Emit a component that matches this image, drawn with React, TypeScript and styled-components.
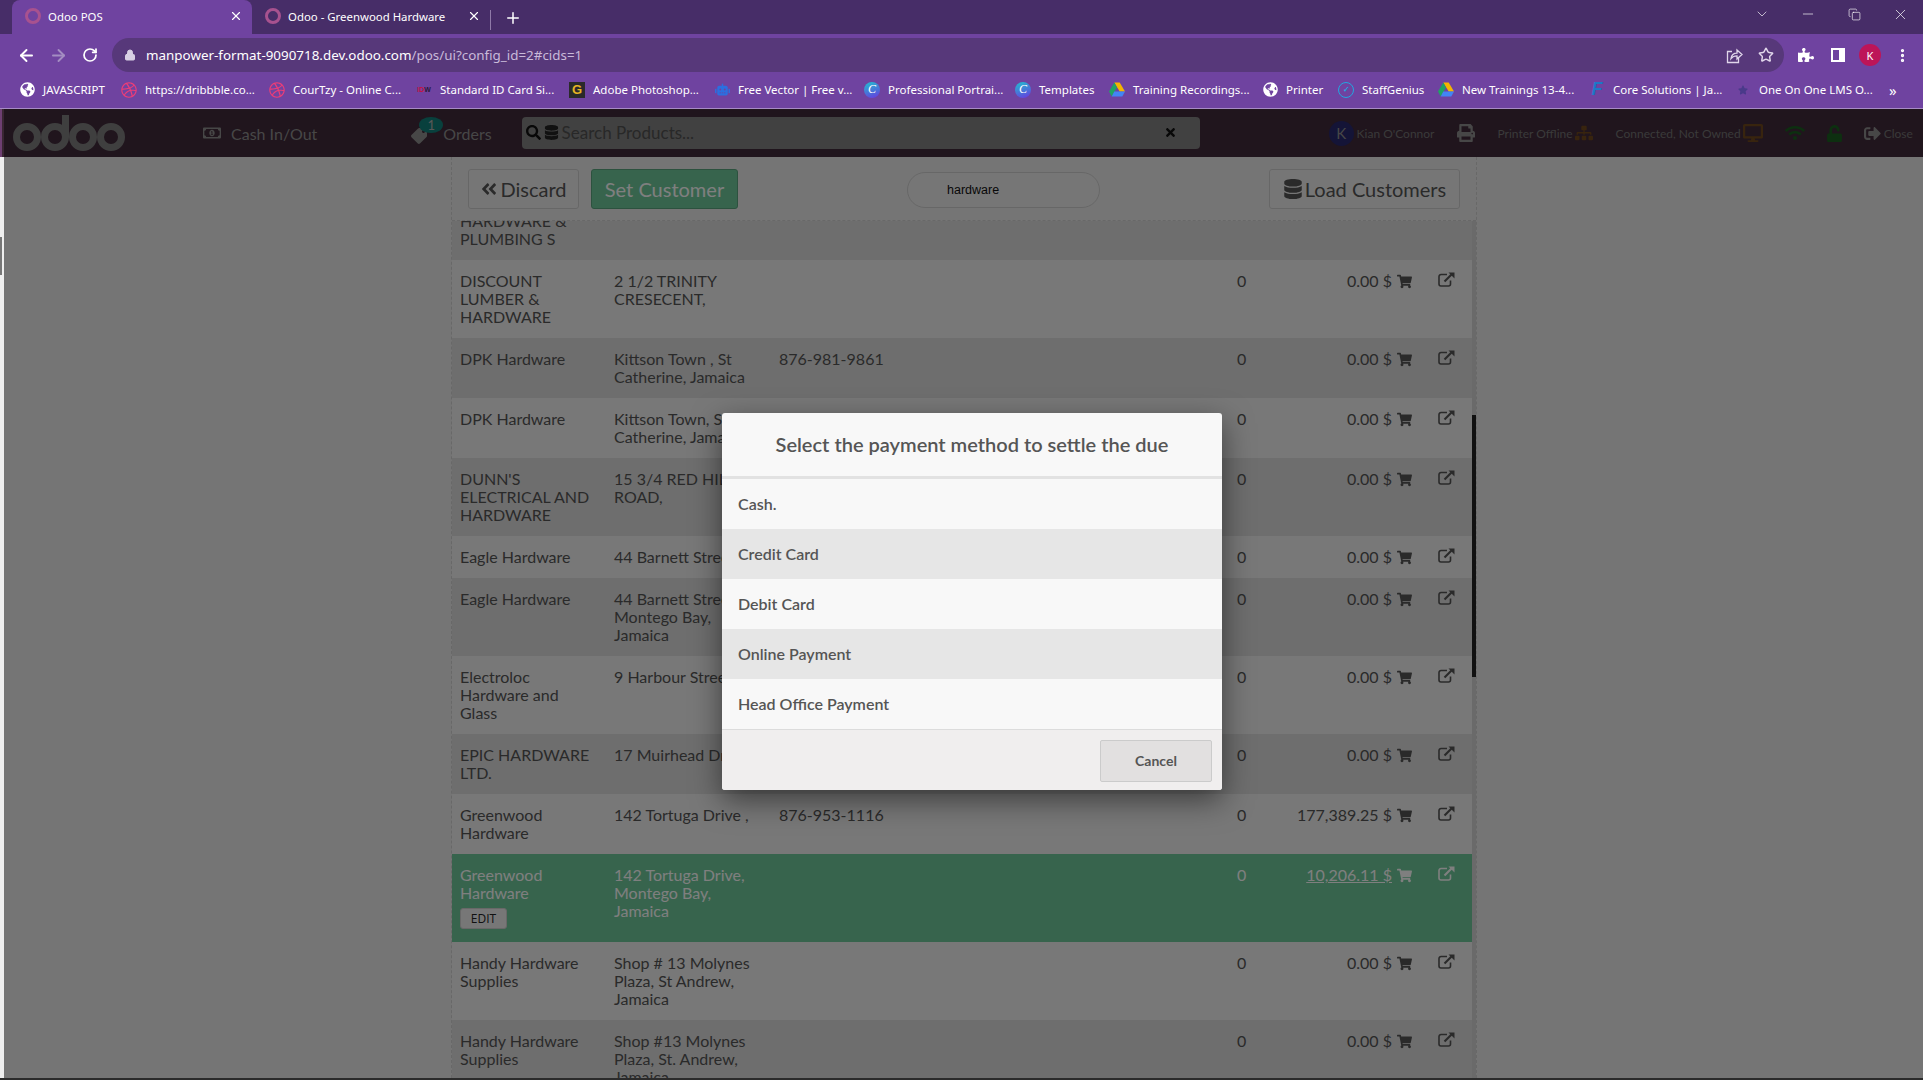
import React from "react";
import styled, { createGlobalStyle } from "styled-components";
import {
  FaShoppingCart,
  FaDatabase,
  FaSearch,
  FaTimes,
  FaPrint,
  FaSitemap,
  FaDesktop,
  FaWifi,
  FaUnlock,
  FaSignOutAlt,
  FaRegMoneyBillAlt,
  FaTag,
  FaDribbble,
  FaRobot,
  FaGlobeAmericas,
  FaStar,
  FaPuzzlePiece,
  FaAngleDoubleLeft,
} from "react-icons/fa";
import { ArrowLeft, ArrowRight, RotateCw, Lock, Star, ChevronDown, Minus, Copy, X, Plus, MoreVertical } from "lucide-react";

const GlobalStyle = createGlobalStyle`
  html, body { margin: 0; padding: 0; background: #efefef; }
  #root { width: 1923px; height: 1080px; overflow: hidden; }
  * { box-sizing: border-box; }
`;

const Root = styled.div`
  width: 1923px;
  height: 1080px;
  display: flex;
  flex-direction: column;
  overflow: hidden;
  font-family: "Lato", sans-serif;
`;

/* chrome browser */
const TabStrip = styled.div`
  height: 34px;
  background: #472d68;
  display: flex;
  align-items: flex-end;
  padding-left: 12px;
  color: #fff;
  font: 11.4px "Noto Sans", sans-serif;
`;

const Tab = styled.div<{ $active?: boolean }>`
  width: ${(p) => (p.$active ? 240 : 238)}px;
  height: 34px;
  display: flex;
  align-items: center;
  padding: 0 9px 2px 12px;
  background: ${(p) => (p.$active ? "#6f43a0" : "transparent")};
  border-radius: 8px 8px 0 0;
`;

const TabIcon = styled.span`
  width: 16px;
  height: 16px;
  border: 3px solid #a8528f;
  border-radius: 50%;
  margin: 0 7px 0 1px;
  flex: none;
`;

const TabTitle = styled.span`
  flex: 1;
  white-space: nowrap;
`;

const Divider = styled.span`
  width: 1px;
  height: 20px;
  background: #8f7aa8;
  margin: 0 0 4px 0;
`;

const NewTab = styled.span`
  display: flex;
  margin: 0 0 7px 13px;
`;

const WindowControls = styled.div`
  margin-left: auto;
  display: flex;
  align-items: center;
  height: 28px;
  margin-bottom: 6px;
`;

const WinBtn = styled.span<{ $w: number }>`
  width: ${(p) => p.$w}px;
  display: flex;
  justify-content: center;
`;

const Toolbar = styled.div`
  height: 38px;
  background: #6f43a0;
  display: flex;
  align-items: flex-end;
  padding-left: 5px;
  color: #fff;
`;

const NavBtn = styled.span<{ $w: number; $dim?: boolean }>`
  width: ${(p) => p.$w}px;
  height: 34px;
  flex: none;
  display: flex;
  align-items: center;
  justify-content: center;
  color: ${(p) => (p.$dim ? "#a48dc2" : "#fff")};
`;

const Omnibox = styled.div`
  width: 1672px;
  height: 34px;
  margin-left: 1px;
  background: #57387a;
  border-radius: 17px;
  display: flex;
  align-items: center;
  padding-left: 12px;
  font: 13.4px "Noto Sans", sans-serif;
  color: #fff;
  flex: none;
`;

const UrlText = styled.span`
  margin-left: 10px;
  flex: 1;
  white-space: nowrap;
`;

const UrlDim = styled.span`
  color: #c9bad9;
`;

const OmniIcon = styled.span<{ $w: number }>`
  width: ${(p) => p.$w}px;
  display: flex;
  justify-content: center;
  color: #e0d6ea;
`;

const Avatar = styled.span`
  width: 22px;
  height: 22px;
  border-radius: 50%;
  background: #bd1558;
  color: #fff;
  font: 11px "Noto Sans", sans-serif;
  display: flex;
  align-items: center;
  justify-content: center;
`;

const SideIcon = styled.span`
  width: 14px;
  height: 14px;
  border: 2px solid #fff;
  border-right-width: 6px;
  display: block;
`;

const BookmarkBar = styled.div`
  height: 37px;
  background: #6f43a0;
  border-bottom: 1px solid #a78bc5;
  display: flex;
  align-items: center;
  padding: 0 0 1px 19px;
  color: #fff;
  font: 11.5px "Noto Sans", sans-serif;
`;

const Bookmark = styled.div<{ $w: number }>`
  width: ${(p) => p.$w}px;
  display: flex;
  align-items: center;
  flex: none;
  white-space: nowrap;
`;

const BookmarkIcon = styled.span`
  width: 16px;
  height: 16px;
  margin-right: 8px;
  flex: none;
  display: flex;
  align-items: center;
  justify-content: center;
`;

const CanvaDot = styled.span`
  width: 16px;
  height: 16px;
  border-radius: 50%;
  background: linear-gradient(160deg, #1fc3d0, #6a35e0);
  font: italic 12px "Liberation Serif", serif;
  color: #fff;
  display: flex;
  align-items: center;
  justify-content: center;
`;

const GoogleG = styled.span`
  width: 16px;
  height: 16px;
  background: #2a2a2a;
  color: #e6b323;
  font: bold 13px "Liberation Sans", sans-serif;
  display: flex;
  align-items: center;
  justify-content: center;
`;

const IdwMark = styled.span`
  font: bold 7px "Liberation Sans", sans-serif;
  color: #2a1a3a;
`;

const IdwRed = styled.span`
  color: #c3123f;
`;

const FMark = styled.span`
  font: italic bold 18px "Liberation Sans", sans-serif;
  color: #1c78c8;
`;

const StaffRing = styled.span`
  width: 16px;
  height: 16px;
  border: 1.5px solid #22a7e0;
  border-radius: 50%;
  color: #22a7e0;
  font: bold 8px "Liberation Sans", sans-serif;
  display: flex;
  align-items: center;
  justify-content: center;
`;

const More = styled.span`
  margin-left: 10px;
  font-size: 15px;
`;

/* pos page */
const Page = styled.div`
  flex: 1;
  min-height: 0;
  display: flex;
  position: relative;
`;

const LeftEdge = styled.div`
  width: 4px;
  flex: none;
  background: #efefef;
  display: flex;
  flex-direction: column;
`;

const EdgeHead = styled.div`
  height: 48px;
  background: linear-gradient(90deg, #6e3f72 50%, #3a2733 50%);
`;

const EdgeThumb = styled.div`
  width: 2px;
  height: 38px;
  margin-top: 80px;
  background: #777;
`;

const Screen = styled.div`
  flex: 1;
  min-width: 0;
  position: relative;
  display: flex;
  flex-direction: column;
  background: #ebebeb;
`;

const PosHeader = styled.div`
  height: 48px;
  flex: none;
  background: #402a3a;
  display: flex;
  align-items: center;
  color: #8e8e8e;
  font-size: 16px;
`;

const Logo = styled.svg`
  width: 112px;
  height: 36px;
  margin-left: 9px;
  flex: none;
`;

const HeaderItem = styled.div<{ $ml: number }>`
  margin-left: ${(p) => p.$ml}px;
  display: flex;
  align-items: center;
  position: relative;
  flex: none;
  white-space: nowrap;
`;

const HeaderLabel = styled.span<{ $ml: number }>`
  margin-left: ${(p) => p.$ml}px;
`;

const OrderTag = styled(FaTag)`
  transform: scaleX(-1);
  margin-top: 6px;
`;

const OrderBadge = styled.span`
  position: absolute;
  left: 8px;
  top: -5px;
  width: 24px;
  height: 16px;
  border-radius: 50%;
  background: #11807a;
  color: #b0b0b0;
  font-size: 13px;
  line-height: 16px;
  display: flex;
  align-items: center;
  justify-content: center;
`;

const SearchBox = styled.div`
  width: 678px;
  height: 32px;
  margin-left: 30px;
  flex: none;
  background: #828282;
  border-radius: 4px;
  display: flex;
  align-items: center;
  padding: 0 23px 2px 4px;
  color: #111;
  font-size: 17px;
`;

const DbIcon = styled(FaDatabase)`
  margin-left: 3px;
  color: #222;
`;

const SearchText = styled.span`
  flex: 1;
  color: #505050;
  margin-left: 3px;
`;

const StatusText = styled.span<{ $ml?: number; $size?: number }>`
  margin-left: ${(p) => p.$ml ?? 0}px;
  font-size: ${(p) => p.$size ?? 12}px;
  color: #747474;
  white-space: nowrap;
`;

const StatusIcon = styled.span<{ $ml?: number; $color?: string }>`
  margin-left: ${(p) => p.$ml ?? 0}px;
  color: ${(p) => p.$color ?? "inherit"};
  display: flex;
`;

const UserDot = styled.span`
  width: 25px;
  height: 25px;
  border-radius: 50%;
  background: #28286e;
  color: #8e8e8e;
  font-size: 15px;
  display: flex;
  align-items: center;
  justify-content: center;
  margin-right: 3px;
`;

const Window = styled.div`
  width: 1026px;
  margin-left: 447px;
  flex: 1;
  min-height: 0;
  display: flex;
  flex-direction: column;
  border: 1px dashed #d0d0d0;
  border-width: 0 1px;
`;

const WindowBar = styled.div`
  height: 64px;
  flex: none;
  display: flex;
  align-items: flex-start;
  padding: 12px 16px 0 16px;
  border-bottom: 1px dashed #d0d0d0;
`;

const BarButton = styled.div<{ $w: number; $primary?: boolean }>`
  width: ${(p) => p.$w}px;
  height: 40px;
  flex: none;
  border-radius: 3px;
  border: 1px solid ${(p) => (p.$primary ? "#5ba57f" : "#cfcfcf")};
  background: ${(p) => (p.$primary ? "#6ec89b" : "#ededed")};
  color: ${(p) => (p.$primary ? "#fff" : "#555")};
  font-size: 20px;
  display: flex;
  align-items: center;
  justify-content: center;
  gap: 2px;
  margin-right: 12px;
  padding-bottom: 1px;
  white-space: nowrap;
`;

const SearchPill = styled.div`
  width: 193px;
  height: 36px;
  margin: 3px 0 0 157px;
  flex: none;
  border: 1px solid #cfcfcf;
  border-radius: 18px;
  background: #ededed;
  display: flex;
  align-items: center;
  padding-left: 39px;
  font: 12.5px "Liberation Sans", sans-serif;
  color: #111;
`;

const LoadButton = styled(BarButton)`
  margin: 0 0 0 auto;
`;

const ListArea = styled.div`
  flex: 1;
  min-height: 0;
  display: flex;
  overflow: hidden;
`;

const List = styled.div`
  flex: 1;
  margin-top: -39px;
`;

const Scrollbar = styled.div`
  width: 4px;
  flex: none;
  background: #d4d4d4;
  padding-top: 194px;
`;

const ScrollThumb = styled.div`
  height: 262px;
  background: #222;
`;

const Row = styled.div<{ $alt?: boolean; $sel?: boolean }>`
  display: grid;
  grid-template-columns: 154px 165px 458px 40px 115px 46px 1fr;
  padding: 12px 0 12px 8px;
  font-size: 16px;
  line-height: 18px;
  background: ${(p) => (p.$sel ? "#6ec89b" : p.$alt ? "#dcdcdc" : "#f0f0f0")};
  color: ${(p) => (p.$sel ? "#fff" : "#555")};
`;

const Name = styled.div`
  max-width: 138px;
`;

const Address = styled.div`
  max-width: 142px;
`;

const Amount = styled.div<{ $sel?: boolean }>`
  text-align: right;
  text-decoration: ${(p) => (p.$sel ? "underline" : "none")};
`;

const Cart = styled.div`
  padding-left: 5px;
  display: flex;
  align-items: flex-start;
  padding-top: 2px;
`;

const LinkCell = styled.div`
  display: flex;
  align-items: flex-start;
`;

const EditBtn = styled.div`
  width: 47px;
  height: 21px;
  margin: 6px 0 1px 0;
  background: #eee;
  border-radius: 3px;
  border: 1px solid #d0d0d0;
  color: #222;
  font: 12px "Open Sans", sans-serif;
  display: flex;
  align-items: center;
  justify-content: center;
`;

const BottomStrip = styled.div`
  height: 2px;
  flex: none;
  background: #2b2b2b;
`;

/* dim layer and popup */
const Dim = styled.div`
  position: absolute;
  inset: 0;
  background: rgba(0, 0, 0, 0.5);
`;

const Modal = styled.div`
  position: absolute;
  left: 718px;
  top: 304px;
  width: 500px;
  height: 377px;
  border-radius: 3px;
  background: #f8f8f8;
  box-shadow: 0 10px 30px rgba(0, 0, 0, 0.5);
  overflow: hidden;
  color: #555;
  display: flex;
  flex-direction: column;
`;

const ModalTitle = styled.div`
  height: 66px;
  flex: none;
  border-bottom: 3px solid #e2e2e2;
  padding-bottom: 2px;
  font-size: 20px;
  font-weight: 600;
  display: flex;
  align-items: center;
  justify-content: center;
`;

const Method = styled.div<{ $alt?: boolean }>`
  height: 50px;
  flex: none;
  padding: 0 0 2px 16px;
  display: flex;
  align-items: center;
  font-size: 16px;
  font-weight: 600;
  background: ${(p) => (p.$alt ? "#e6e6e6" : "#f8f8f8")};
`;

const ModalFooter = styled.div`
  flex: 1;
  background: #f0eeee;
  border-top: 1px solid #dcdcdc;
  display: flex;
  justify-content: flex-end;
  padding: 10px 10px 0 0;
`;

const CancelBtn = styled.div`
  width: 112px;
  height: 42px;
  background: #e2e0e0;
  border: 1px solid #cbcbcb;
  border-radius: 2px;
  padding-bottom: 2px;
  font-size: 14px;
  font-weight: 700;
  display: flex;
  align-items: center;
  justify-content: center;
`;

const DriveIcon = () => (
  <svg width="16" height="15" viewBox="0 0 16 14">
    <polygon points="5.3,0 10.7,0 16,9 10.7,9" fill="#f5b400" />
    <polygon points="5.3,0 0,9 2.7,14 8,5" fill="#1fa463" />
    <polygon points="2.7,14 13.3,14 16,9 5.3,9" fill="#4285f4" />
  </svg>
);

const LinkIcon = () => (
  <svg width="17" height="15" viewBox="0 0 17 15" fill="none" stroke="currentColor">
    <path d="M9 2.5H3a2 2 0 0 0-2 2V12a2 2 0 0 0 2 2h7.5a2 2 0 0 0 2-2V8.5" strokeWidth="1.6" />
    <path d="M6.5 9.5 14 2" strokeWidth="2.2" />
    <path d="M10.5 0.5H16.5V6.5Z" fill="currentColor" stroke="none" />
  </svg>
);

// chrome's "share this page" icon: open box with a curved arrow
const ShareIcon = () => (
  <svg width="17" height="17" viewBox="0 0 17 17" fill="none" stroke="currentColor" strokeWidth="1.3">
    <path d="M6 4.5H1.5V15.5H12.5V11" />
    <path d="M5 11.5C5.5 8 8 6.2 11 6.2V3L16 7.5 11 12V8.8C8.5 8.8 6.5 9.6 5 11.5Z" />
  </svg>
);

const OdooLogo = () => (
  <Logo viewBox="0 0 112 36" fill="none" stroke="#7e7e7e" strokeWidth="7">
    <circle cx="14" cy="22" r="10.5" />
    <circle cx="42" cy="22" r="10.5" />
    <path d="M52.5 22V0" />
    <circle cx="70" cy="22" r="10.5" />
    <circle cx="98" cy="22" r="10.5" />
  </Logo>
);

const bookmarks = [
  { w: 102, text: "JAVASCRIPT", icon: <FaGlobeAmericas size={15} /> },
  { w: 148, text: "https://dribbble.co...", icon: <FaDribbble size={16} color="#ee3d77" /> },
  { w: 147, text: "CourTzy - Online C...", icon: <FaDribbble size={16} color="#ee3d77" /> },
  { w: 153, text: "Standard ID Card Si...", icon: <IdwMark><IdwRed>ID</IdwRed>W</IdwMark> },
  { w: 145, text: "Adobe Photoshop...", icon: <GoogleG>G</GoogleG> },
  { w: 150, text: "Free Vector | Free v...", icon: <FaRobot size={15} color="#2b6fe0" /> },
  { w: 151, text: "Professional Portrai...", icon: <CanvaDot>C</CanvaDot> },
  { w: 94, text: "Templates", icon: <CanvaDot>C</CanvaDot> },
  { w: 153, text: "Training Recordings...", icon: <DriveIcon /> },
  { w: 76, text: "Printer", icon: <FaGlobeAmericas size={15} /> },
  { w: 100, text: "StaffGenius", icon: <StaffRing>✓</StaffRing> },
  { w: 151, text: "New Trainings 13-4...", icon: <DriveIcon /> },
  { w: 146, text: "Core Solutions | Ja...", icon: <FMark>F</FMark> },
  { w: 144, text: "One On One LMS O...", icon: <FaStar size={10} color="#4a3a8a" /> },
];

type Customer = {
  name: string;
  address: string;
  phone?: string;
  amount: string;
  sel?: boolean;
};

const customers: Customer[] = [
  { name: "ELECTRICAL HARDWARE & PLUMBING S", address: "", amount: "" },
  { name: "DISCOUNT LUMBER & HARDWARE", address: "2 1/2 TRINITY CRESECENT,", amount: "0.00 $" },
  { name: "DPK Hardware", address: "Kittson Town , St Catherine, Jamaica", phone: "876-981-9861", amount: "0.00 $" },
  { name: "DPK Hardware", address: "Kittson Town, St Catherine, Jamaica", amount: "0.00 $" },
  { name: "DUNN'S ELECTRICAL AND HARDWARE", address: "15 3/4 RED HILLS ROAD,", amount: "0.00 $" },
  { name: "Eagle Hardware", address: "44 Barnett Street", amount: "0.00 $" },
  { name: "Eagle Hardware", address: "44 Barnett Street, Montego Bay, Jamaica", amount: "0.00 $" },
  { name: "Electroloc Hardware and Glass", address: "9 Harbour Street", amount: "0.00 $" },
  { name: "EPIC HARDWARE LTD.", address: "17 Muirhead Dr", amount: "0.00 $" },
  { name: "Greenwood Hardware", address: "142 Tortuga Drive ,", phone: "876-953-1116", amount: "177,389.25 $" },
  { name: "Greenwood Hardware", address: "142 Tortuga Drive, Montego Bay, Jamaica", amount: "10,206.11 $", sel: true },
  { name: "Handy Hardware Supplies", address: "Shop # 13 Molynes Plaza, St Andrew, Jamaica", amount: "0.00 $" },
  { name: "Handy Hardware Supplies", address: "Shop #13 Molynes Plaza, St. Andrew, Jamaica", amount: "0.00 $" },
];

const methods = ["Cash.", "Credit Card", "Debit Card", "Online Payment", "Head Office Payment"];

export default function App() {
  return (
    <Root>
      <GlobalStyle />
      <TabStrip>
        <Tab $active>
          <TabIcon />
          <TabTitle>Odoo POS</TabTitle>
          <X size={14} />
        </Tab>
        <Tab>
          <TabIcon />
          <TabTitle>Odoo - Greenwood Hardware</TabTitle>
          <X size={14} />
        </Tab>
        <Divider />
        <NewTab>
          <Plus size={18} />
        </NewTab>
        <WindowControls>
          <WinBtn $w={46}><ChevronDown size={16} strokeWidth={1} /></WinBtn>
          <WinBtn $w={46}><Minus size={16} strokeWidth={1} /></WinBtn>
          <WinBtn $w={46}><Copy size={13} strokeWidth={1.2} /></WinBtn>
          <WinBtn $w={46}><X size={17} strokeWidth={1} /></WinBtn>
        </WindowControls>
      </TabStrip>
      <Toolbar>
        <NavBtn $w={42}><ArrowLeft size={19} strokeWidth={2.4} /></NavBtn>
        <NavBtn $w={22} $dim><ArrowRight size={19} strokeWidth={2.4} /></NavBtn>
        <NavBtn $w={42}><RotateCw size={16} strokeWidth={2.6} /></NavBtn>
        <Omnibox>
          <Lock size={12} fill="#d8cfe3" color="#d8cfe3" />
          <UrlText>
            manpower-format-9090718.dev.odoo.com<UrlDim>/pos/ui?config_id=2#cids=1</UrlDim>
          </UrlText>
          <OmniIcon $w={32}><ShareIcon /></OmniIcon>
          <OmniIcon $w={32}><Star size={16} strokeWidth={2.2} /></OmniIcon>
          <OmniIcon $w={2} />
        </Omnibox>
        <NavBtn $w={44}><FaPuzzlePiece size={16} /></NavBtn>
        <NavBtn $w={20}><SideIcon /></NavBtn>
        <NavBtn $w={44}><Avatar>K</Avatar></NavBtn>
        <NavBtn $w={20}><MoreVertical size={17} strokeWidth={2.6} /></NavBtn>
      </Toolbar>
      <BookmarkBar>
        {bookmarks.map((b, i) => (
          <Bookmark key={i} $w={b.w}>
            <BookmarkIcon>{b.icon}</BookmarkIcon>
            {b.text}
          </Bookmark>
        ))}
        <More>»</More>
      </BookmarkBar>

      <Page>
        <LeftEdge>
          <EdgeHead />
          <EdgeThumb />
        </LeftEdge>
        <Screen>
          <PosHeader>
            <OdooLogo />
            <HeaderItem $ml={78}>
              <FaRegMoneyBillAlt size={18} />
              <HeaderLabel $ml={10}>Cash In/Out</HeaderLabel>
            </HeaderItem>
            <HeaderItem $ml={94}>
              <OrderTag size={16} />
              <OrderBadge>1</OrderBadge>
              <HeaderLabel $ml={16}>Orders</HeaderLabel>
            </HeaderItem>
            <SearchBox>
              <FaSearch size={15} />
              <DbIcon size={15} />
              <SearchText>Search Products...</SearchText>
              <FaTimes size={13} />
            </SearchBox>
            <HeaderItem $ml={129}>
              <UserDot>K</UserDot>
              <StatusText>Kian O'Connor</StatusText>
            </HeaderItem>
            <HeaderItem $ml={23}><FaPrint size={18} /></HeaderItem>
            <HeaderItem $ml={22}>
              <StatusText>Printer Offline</StatusText>
              <StatusIcon $ml={2} $color="#70481c"><FaSitemap size={18} /></StatusIcon>
            </HeaderItem>
            <HeaderItem $ml={23}>
              <StatusText>Connected, Not Owned</StatusText>
              <StatusIcon $ml={2} $color="#70481c"><FaDesktop size={20} /></StatusIcon>
            </HeaderItem>
            <HeaderItem $ml={22}><StatusIcon $color="#1a5e20"><FaWifi size={20} /></StatusIcon></HeaderItem>
            <HeaderItem $ml={21}><StatusIcon $color="#1a5e20"><FaUnlock size={17} /></StatusIcon></HeaderItem>
            <HeaderItem $ml={21}>
              <FaSignOutAlt size={17} />
              <StatusText $ml={3}>Close</StatusText>
            </HeaderItem>
          </PosHeader>
          <Window>
            <WindowBar>
              <BarButton $w={111}><FaAngleDoubleLeft size={18} />Discard</BarButton>
              <BarButton $w={147} $primary>Set Customer</BarButton>
              <SearchPill>hardware</SearchPill>
              <LoadButton $w={191}><FaDatabase size={20} />Load Customers</LoadButton>
            </WindowBar>
            <ListArea>
              <List>
                {customers.map((c, i) => (
                  <Row key={i} $alt={i % 2 === 0 && !c.sel} $sel={c.sel}>
                    <Name>
                      {c.name}
                      {c.sel && <EditBtn>EDIT</EditBtn>}
                    </Name>
                    <Address>{c.address}</Address>
                    <div>{c.phone}</div>
                    <div>{c.amount && "0"}</div>
                    <Amount $sel={c.sel}>{c.amount}</Amount>
                    <Cart>{c.amount && <FaShoppingCart size={15} />}</Cart>
                    <LinkCell>{c.amount && <LinkIcon />}</LinkCell>
                  </Row>
                ))}
              </List>
              <Scrollbar>
                <ScrollThumb />
              </Scrollbar>
            </ListArea>
          </Window>
          <Dim />
          <Modal>
            <ModalTitle>Select the payment method to settle the due</ModalTitle>
            {methods.map((m, i) => (
              <Method key={m} $alt={i % 2 === 1}>{m}</Method>
            ))}
            <ModalFooter>
              <CancelBtn>Cancel</CancelBtn>
            </ModalFooter>
          </Modal>
        </Screen>
      </Page>
      <BottomStrip />
    </Root>
  );
}
